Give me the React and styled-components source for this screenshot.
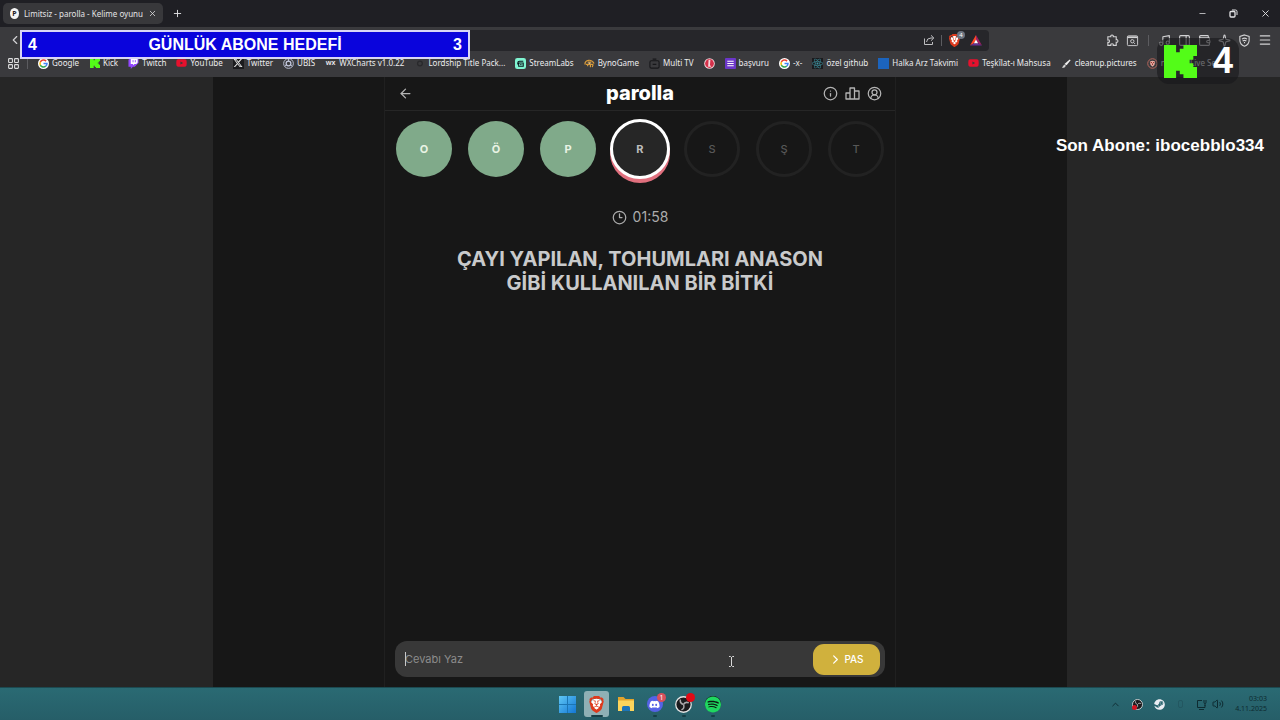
import styled, { createGlobalStyle } from "styled-components";
import {
  X, Plus, Minus, ChevronLeft, ChevronUp, LayoutGrid, Music, PanelRight,
  Wallet, Sparkle, Menu, Volume2, ArrowLeft, Info, CircleUserRound, Clock3,
} from "lucide-react";
import { IoChevronForward } from "react-icons/io5";
import { FaYoutube, FaXTwitter, FaDiscord, FaSteam, FaSpotify, FaReact } from "react-icons/fa6";
import { SiBrave } from "react-icons/si";

const letters = [
  { char: "O", state: "correct" },
  { char: "Ö", state: "correct" },
  { char: "P", state: "correct" },
  { char: "R", state: "active" },
  { char: "S", state: "idle" },
  { char: "Ş", state: "idle" },
  { char: "T", state: "idle" },
];

function KickIcon({ size = 11 }) {
  return (
    <svg width={size} height={size} viewBox="0 0 9 9" fill="#53fc18">
      <path d="M0 0h3.3v2h1V1h1V0H9v3H8v1H7v1h1v1h1v3H5.3V8h-1V7h-1v2H0z" />
    </svg>
  );
}

function GoogleIcon() {
  return (
    <svg width="11" height="11" viewBox="0 0 12 12">
      <circle cx="6" cy="6" r="6" fill="#fff" />
      <g fill="none" strokeWidth="1.7">
        <path d="M8.8 3.4A3.8 3.8 0 0 0 2.6 4.4" stroke="#ea4335" />
        <path d="M2.6 4.4A3.8 3.8 0 0 0 2.6 7.7" stroke="#fbbc05" />
        <path d="M2.6 7.7A3.8 3.8 0 0 0 8.4 8.9" stroke="#34a853" />
        <path d="M8.4 8.9A3.8 3.8 0 0 0 9.8 6H6" stroke="#4285f4" />
      </g>
    </svg>
  );
}

function TwitchIcon() {
  return (
    <svg width="11" height="11" viewBox="0 0 12 12">
      <path d="M2.5 0L.5 2v7.5H3V12l2.400-2.500h2L11.500 5.500V0z" fill="#9146ff" />
      <path d="M3 1h7.500v4L9 6.500H7L5.500 8V6.500H3z" fill="#fff" />
      <path d="M5.500 2.300v2.400M8 2.300v2.400" stroke="#9146ff" />
    </svg>
  );
}

function UbisIcon() {
  return (
    <svg width="11" height="11" viewBox="0 0 12 12" fill="none" stroke="#c3c8dd">
      <circle cx="6" cy="6" r="5.3" />
      <circle cx="6" cy="6" r="2.6" strokeWidth="1.4" />
      <path d="M6 1v3M2 9l2-2M10 9l-2-2" />
    </svg>
  );
}

function RingIcon() {
  return (
    <svg width="11" height="11" viewBox="0 0 12 12">
      <circle cx="6.5" cy="6" r="2.6" fill="none" stroke="#29292c" strokeWidth="1.4" />
    </svg>
  );
}

function StreamlabsIcon() {
  return (
    <svg width="11" height="11" viewBox="0 0 12 12">
      <rect width="12" height="12" rx="2.5" fill="#80f5d2" />
      <path d="M3 7V5.5Q3 3.5 5 3.5h4M4 5.5h5v3.5H4z" fill="none" stroke="#09161d" strokeWidth="1.1" />
      <path d="M6 6.8v1M7.5 6.8v1" stroke="#09161d" />
    </svg>
  );
}

function BynoIcon() {
  return (
    <svg width="11" height="11" viewBox="0 0 12 12" fill="none" stroke="#d99b3a" strokeWidth="1.3">
      <path d="M1 7Q1 3 5 2.5T11 6M2 7h8M4 4.5h4M4 7v2M7 7v3M10 7l-1 3" />
      <path d="M5 5.7h2" stroke="#e9d9b8" />
    </svg>
  );
}

function TvIcon() {
  return (
    <svg width="11" height="11" viewBox="0 0 12 12" fill="none" stroke="#17171a" strokeWidth="1.2">
      <rect x="1" y="3" width="10" height="8" rx="1.5" />
      <path d="M4 1.2h4M4 7h4" />
    </svg>
  );
}

function RedSealIcon() {
  return (
    <svg width="11" height="11" viewBox="0 0 12 12">
      <circle cx="6" cy="6" r="5.8" fill="#f0d3d7" />
      <circle cx="6" cy="6" r="4.8" fill="#d5304a" />
      <path d="M5 2h2l-.5 5.500L8 9.500H4.500z" fill="#f3d6da" />
    </svg>
  );
}

function FormIcon() {
  return (
    <svg width="11" height="11" viewBox="0 0 12 12">
      <rect width="12" height="12" rx="1" fill="#6b36c9" />
      <path d="M2.5 3.5h7M2.5 6h7M2.5 8.5h7" stroke="#fff" strokeWidth="1.2" />
    </svg>
  );
}

function BlueSquare() {
  return (
    <svg width="11" height="11">
      <rect width="11" height="11" fill="#1c64bd" />
    </svg>
  );
}

function CleanupIcon() {
  return (
    <svg width="11" height="11" viewBox="0 0 12 12">
      <path d="M9.5 1.5l1 1L6 8 3.8 6.6z" fill="#f2f2f2" />
      <path d="M3.5 7l2 1.5-2 2H1z" fill="#d4d4d4" />
    </svg>
  );
}

function NotiIcon() {
  return (
    <svg width="11" height="11" viewBox="0 0 12 12">
      <circle cx="6" cy="6" r="5.2" fill="none" stroke="#bf6a5f" />
      <path d="M3 4q3-2 6 0-.3 4-3 5.5Q3.3 8 3 4z" fill="#e9aaa0" />
      <path d="M4 5h1.4M6.6 5H8M6 6v1.5" stroke="#7d201d" />
    </svg>
  );
}

function ShareIcon() {
  return (
    <svg width="12" height="12" viewBox="0 0 12 12" fill="none" stroke="#bdbdc0">
      <path d="M1.5 4.5v6h8V8" />
      <path d="M3.5 8Q3.8 4 8 4h2.5M8 1.3L10.8 4 8 6.7" />
    </svg>
  );
}

function PuzzleIcon() {
  return (
    <svg width="13" height="13" viewBox="0 0 14 14" fill="none" stroke="currentColor" strokeWidth="1.2">
      <path d="M2 3h3.2q-.5-1.8 1.3-1.8T7.8 3H11v3.2q1.8-.5 1.8 1.3T11 8.8v3.4H7.8q.4-1.7-1.3-1.7t-1.3 1.7H2V9q1.7.4 1.7-1.3T2 6.4z" />
    </svg>
  );
}

function SearchWindowIcon() {
  return (
    <svg width="13" height="13" viewBox="0 0 14 14" fill="none" stroke="currentColor">
      <rect x="1.5" y="2" width="11" height="10.5" rx="1" />
      <path d="M1.5 3.5h11" strokeWidth="1.8" />
      <circle cx="6.8" cy="7.8" r="1.8" />
      <path d="M8.2 9.2l1.5 1.5" />
    </svg>
  );
}

function ShieldIcon() {
  return (
    <svg width="13" height="13" viewBox="0 0 14 14" fill="none" stroke="currentColor" strokeWidth="1.2">
      <path d="M7 1l5 1.6v4Q12 11 7 13.2 2 11 2 6.6v-4z" />
      <path d="M4.3 5.5q2.7-2 5.4 0M5 7.5q2-1.3 4 0M6.4 9.3h1.2" />
    </svg>
  );
}

function RestoreIcon() {
  return (
    <svg width="9" height="9" viewBox="0 0 9 9" fill="none" stroke="currentColor">
      <rect x="1" y="2.5" width="5" height="5.5" rx="1" strokeWidth="1.3" />
      <path d="M3 1h3.5Q8 1 8 2.5V6" />
    </svg>
  );
}

function BatIcon() {
  return (
    <svg width="12" height="11" viewBox="0 0 12 11">
      <path d="M6 0L0 10.5l4-2.2L6 5z" fill="#ff4724" />
      <path d="M6 0l6 10.5-4-2.2L6 5z" fill="#9e1f63" />
      <path d="M0 10.5h12L8 8.2H4z" fill="#662d91" />
      <path d="M6 4.5L3.9 8.2h4.2z" fill="#fff" />
    </svg>
  );
}

function PodiumIcon() {
  return (
    <svg width="15" height="15" viewBox="0 0 15 15" fill="none" stroke="currentColor" strokeWidth="1.3" strokeLinejoin="round">
      <path d="M1 7h4v6H1zM5 2h4.5v11H5zM9.5 5H14v8H9.5z" />
    </svg>
  );
}

function WindowsIcon() {
  return (
    <svg width="17" height="17" viewBox="0 0 17 17">
      <defs>
        <linearGradient id="win" x1="0" y1="0" x2="1" y2="1">
          <stop offset="0" stopColor="#5fc8f5" />
          <stop offset="1" stopColor="#1376d4" />
        </linearGradient>
      </defs>
      <rect width="17" height="17" fill="#1b76b4" />
      <path d="M0 0h8v8H0zM9 0h8v8H9zM0 9h8v8H0zM9 9h8v8H9z" fill="url(#win)" />
    </svg>
  );
}

function FolderIcon() {
  return (
    <svg width="18" height="16" viewBox="0 0 18 16">
      <path d="M1 1h5.5l2 2H17v4H1z" fill="#e3a32b" />
      <path d="M1 4.5h16V15H1z" fill="#fbd45c" />
      <path d="M5 15v-3.5Q5 10 6.5 10h5q1.5 0 1.5 1.5V15z" fill="#1d74b8" />
    </svg>
  );
}

function ObsIcon({ size }) {
  return (
    <svg width={size} height={size} viewBox="0 0 16 16">
      <circle cx="8" cy="8" r="7.3" fill="#1b1a1d" stroke="#e4e4e4" strokeWidth="1.2" />
      <g fill="none" stroke="#a9a7aa" strokeWidth="1.4">
        <path d="M5 3.3Q4.5 7 8 8" />
        <path d="M13 6.5Q9.5 5 8 8" />
        <path d="M6 13Q9.5 11.5 8 8" />
      </g>
    </svg>
  );
}

function DisplayIcon() {
  return (
    <svg width="12" height="11" viewBox="0 0 12 11" fill="none" stroke="currentColor">
      <path d="M6 1.5H1.5v7H9V6M3 10.5h5M8 1v2.5q0 1 1 1t1-1V1M9 4.5V7" />
    </svg>
  );
}

function TextCursor() {
  return (
    <svg width="7" height="11" viewBox="0 0 7 11" fill="none" stroke="#d8d8d8">
      <path d="M1 .5h1.5l1 1 1-1H6M3.5 1v9M1 10.5h1.5l1-1 1 1H6" />
    </svg>
  );
}

const bookmarks = [
  { label: "Google", icon: <GoogleIcon /> },
  { label: "Kick", icon: <KickIcon size={10} /> },
  { label: "Twitch", icon: <TwitchIcon /> },
  { label: "YouTube", icon: <FaYoutube color="#e6112d" size={12} /> },
  { label: "Twitter", icon: <FaXTwitter color="#e8e8e8" size={10} />, dark: true },
  { label: "UBIS", icon: <UbisIcon /> },
  { label: "WXCharts v1.0.22", icon: "wx" },
  { label: "Lordship Title Pack...", icon: <RingIcon /> },
  { label: "StreamLabs", icon: <StreamlabsIcon /> },
  { label: "BynoGame", icon: <BynoIcon /> },
  { label: "Multi TV", icon: <TvIcon /> },
  { label: "", icon: <RedSealIcon /> },
  { label: "başvuru", icon: <FormIcon /> },
  { label: "-x-", icon: <GoogleIcon /> },
  { label: "özel github", icon: <FaReact color="#3f93a1" />, dark: true },
  { label: "Halka Arz Takvimi", icon: <BlueSquare /> },
  { label: "Teşkîlat-ı Mahsusa", icon: <FaYoutube color="#e6112d" size={12} /> },
  { label: "cleanup.pictures", icon: <CleanupIcon /> },
  { label: "notifier Live Se", icon: <NotiIcon /> },
];

function Browser() {
  return (
    <>
      <TitleBar>
        <Tab>
          <Favicon>P</Favicon>
          <TabTitle>Limitsiz - parolla - Kelime oyunu</TabTitle>
          <IconButton aria-label="Sekmeyi kapat"><X size={9} /></IconButton>
        </Tab>
        <IconButton aria-label="Yeni sekme"><Plus size={11} /></IconButton>
        <WindowButtons>
          <IconButton aria-label="Küçült"><Minus size={9} /></IconButton>
          <IconButton aria-label="Geri yükle"><RestoreIcon /></IconButton>
          <IconButton aria-label="Kapat"><X size={11} /></IconButton>
        </WindowButtons>
      </TitleBar>
      <Toolbar>
        <IconButton aria-label="Geri"><ChevronLeft size={14} /></IconButton>
        <AddressBar>
          <ShareIcon />
          <Divider />
          <BraveShield>
            <BraveMark $size={13}><SiBrave /></BraveMark>
            <ShieldCount>4</ShieldCount>
          </BraveShield>
          <BatIcon />
        </AddressBar>
        <Tools>
          <IconButton aria-label="Uzantılar"><PuzzleIcon /></IconButton>
          <IconButton aria-label="Ara"><SearchWindowIcon /></IconButton>
          <Divider $spaced />
          <IconButton aria-label="Müzik"><Music size={13} /></IconButton>
          <IconButton aria-label="Kenar çubuğu"><PanelRight size={13} /></IconButton>
          <IconButton aria-label="Cüzdan"><Wallet size={13} /></IconButton>
          <IconButton aria-label="Leo"><Sparkle size={13} /></IconButton>
          <IconButton aria-label="VPN"><ShieldIcon /></IconButton>
          <IconButton aria-label="Menü"><Menu size={14} /></IconButton>
        </Tools>
      </Toolbar>
      <Bookmarks>
        <BookmarksLead>
          <LayoutGrid size={13} />
          <Divider />
        </BookmarksLead>
        {bookmarks.map((b, i) => (
          <Bookmark key={i} href="#">
            <BookmarkIcon $dark={b.dark}>{b.icon}</BookmarkIcon>
            {b.label}
          </Bookmark>
        ))}
      </Bookmarks>
    </>
  );
}

function Game() {
  return (
    <Page>
      <Site>
        <Panel>
          <Header>
            <HeaderButton aria-label="Geri dön"><ArrowLeft size={15} /></HeaderButton>
            <Logo>parolla</Logo>
            <HeaderActions>
              <HeaderButton aria-label="Bilgi"><Info size={15} /></HeaderButton>
              <HeaderButton aria-label="İstatistik"><PodiumIcon /></HeaderButton>
              <HeaderButton aria-label="Profil"><CircleUserRound size={15} /></HeaderButton>
            </HeaderActions>
          </Header>
          <Letters>
            {letters.map((l) => (
              <Letter key={l.char} $state={l.state}>{l.char}</Letter>
            ))}
          </Letters>
          <Timer><Clock3 size={15} />01:58</Timer>
          <Question>ÇAYI YAPILAN, TOHUMLARI ANASON GİBİ KULLANILAN BİR BİTKİ</Question>
          <AnswerForm onSubmit={(e) => e.preventDefault()}>
            <AnswerInput placeholder="Cevabı Yaz" aria-label="Cevabı Yaz" />
            <Caret />
            <PassButton type="button"><IoChevronForward size={13} />PAS</PassButton>
            <Pointer><TextCursor /></Pointer>
          </AnswerForm>
        </Panel>
      </Site>
    </Page>
  );
}

function Taskbar() {
  return (
    <Bar>
      <Apps>
        <AppButton aria-label="Başlat"><WindowsIcon /></AppButton>
        <AppButton aria-label="Brave" $active><BraveMark $size={17}><SiBrave /></BraveMark></AppButton>
        <AppButton aria-label="Dosya Gezgini"><FolderIcon /></AppButton>
        <AppButton aria-label="Discord" $running>
          <Round $bg="#5562e6"><FaDiscord color="#fff" size={11} /></Round>
          <Badge>1</Badge>
        </AppButton>
        <AppButton aria-label="OBS" $running>
          <ObsIcon size={17} />
          <Badge />
        </AppButton>
        <AppButton aria-label="Spotify" $running>
          <Round $bg="#0c1a12"><FaSpotify color="#1fd760" size={17} /></Round>
        </AppButton>
      </Apps>
      <Tray>
        <ChevronUp size={11} />
        <SmallRound><ObsIcon size={11} /><RecDot /></SmallRound>
        <FaSteam color="#e9edf3" size={11} />
        <Faint />
        <TrayGroup>
          <DisplayIcon />
          <Volume2 size={12} />
        </TrayGroup>
        <Clock><time>03:03</time><time>4.11.2025</time></Clock>
      </Tray>
    </Bar>
  );
}

function App() {
  return (
    <>
      <GlobalStyle />
      <Desktop>
        <Browser />
        <Game />
        <Taskbar />
        <Goal><span>4</span><span>GÜNLÜK ABONE HEDEFİ</span><span>3</span></Goal>
        <KickCounter><KickIcon size={33} />4</KickCounter>
        <LastSub>Son Abone: ibocebblo334</LastSub>
      </Desktop>
    </>
  );
}

const GlobalStyle = createGlobalStyle`
  *{
    box-sizing: border-box;
  }
  body{
    margin: 0;
    background: #262626;
    font-family: "Noto Sans", "Open Sans", sans-serif;
  }
  button{
    font: inherit;
    color: inherit;
    border: 0;
    padding: 0;
    background: none;
  }
`;

const Desktop = styled.div`
    position: relative;
    display: flex;
    flex-direction: column;
    min-height: 100vh;
    overflow: hidden;
`;
const TitleBar = styled.div`
    display: flex;
    align-items: center;
    height: 27px;
    padding: 0 9px 0 3px;
    gap: 9px;
    background: #1f1f24;
    color: #e4e4e6;
`;
const Tab = styled.div`
    display: flex;
    align-items: center;
    gap: 5px;
    width: 160px;
    height: 21px;
    padding: 0 6px 0 7px;
    border-radius: 5px;
    background: #38383b;
`;
const Favicon = styled.span`
    display: flex;
    align-items: center;
    justify-content: center;
    width: 11px;
    height: 11px;
    border-radius: 50%;
    background: #f4f4f4;
    color: #1c1c1c;
    font-size: 7px;
    font-weight: 700;
`;
const TabTitle = styled.span`
    flex: 1;
    font-size: 8px;
    white-space: nowrap;
`;
const IconButton = styled.button`
    display: flex;
    align-items: center;
    justify-content: center;
`;
const WindowButtons = styled.div`
    display: flex;
    align-items: center;
    gap: 22px;
    margin-left: auto;
`;
const Toolbar = styled.div`
    display: grid;
    grid-template-columns: 1fr minmax(0, 698px) 1fr;
    align-items: center;
    height: 26px;
    padding: 0 8px;
    background: #3a3a3d;
    color: #d2d2d4;
    > button{
      justify-self: start;
    }
`;
const AddressBar = styled.div`
    display: flex;
    align-items: center;
    justify-content: flex-end;
    gap: 6px;
    height: 21px;
    padding-right: 7px;
    border-radius: 4px;
    background: #26262a;
`;
const Divider = styled.span`
    width: 1px;
    height: 11px;
    flex: none;
    margin: 0 ${({ $spaced }) => ($spaced ? "2px" : "0")};
    background: #5c5c60;
`;
const BraveShield = styled.span`
    position: relative;
    display: flex;
    margin-right: 3px;
`;
const BraveMark = styled.span`
    display: flex;
    font-size: ${({ $size }) => $size}px;
    color: #dd3a1d;
    background: radial-gradient(#fff 45%, transparent 50%);
`;
const ShieldCount = styled.span`
    position: absolute;
    top: -3px;
    right: -4px;
    width: 8px;
    height: 8px;
    border-radius: 4px;
    background: #6d7480;
    color: #fff;
    font-size: 6px;
    line-height: 8px;
    text-align: center;
`;
const Tools = styled.div`
    display: flex;
    align-items: center;
    justify-content: flex-end;
    gap: 7px;
`;
const Bookmarks = styled.nav`
    display: flex;
    align-items: center;
    gap: 10px;
    height: 24px;
    padding: 0 7px 4px;
    overflow: hidden;
    background: #3a3a3d;
    color: #dededf;
`;
const BookmarksLead = styled.div`
    display: flex;
    align-items: center;
    flex: none;
    gap: 7px;
`;
const Bookmark = styled.a`
    display: flex;
    align-items: center;
    gap: 3px;
    flex: none;
    color: #ececee;
    font-size: 8px;
    line-height: 12px;
    text-decoration: none;
    white-space: nowrap;
`;
const BookmarkIcon = styled.span`
    display: flex;
    align-items: center;
    justify-content: center;
    width: 11px;
    height: 11px;
    font-size: 11px;
    background: ${({ $dark }) => ($dark ? "#1b1b1e" : "none")};
    &:not(:has(svg)){
      font-size: 7px;
      font-weight: 600;
    }
`;
const Page = styled.div`
    display: flex;
    flex: 1;
    justify-content: center;
    background: #262626;
`;
const Site = styled.div`
    display: flex;
    justify-content: center;
    width: calc(100% * 2 / 3);
    background: #171717;
`;
const Panel = styled.main`
    display: flex;
    flex-direction: column;
    width: 100%;
    max-width: 512px;
    border: solid #202020;
    border-width: 0 1px;
    font-family: Inter, sans-serif;
`;
const Header = styled.header`
    display: grid;
    grid-template-columns: 1fr auto 1fr;
    align-items: center;
    height: 34px;
    padding: 0 13px;
    border-bottom: 1px solid #262626;
    color: #b4b4b4;
`;
const HeaderButton = styled.button`
    display: flex;
`;
const HeaderActions = styled.div`
    display: flex;
    justify-content: flex-end;
    gap: 7px;
`;
const Logo = styled.h1`
    margin: 0;
    color: #fff;
    font-size: 20px;
    font-weight: 800;
    line-height: 24px;
    padding-bottom: 2px;
`;
const Letters = styled.div`
    display: flex;
    align-items: center;
    justify-content: center;
    gap: 16px;
    height: 76px;
`;
const Letter = styled.span`
    display: flex;
    align-items: center;
    justify-content: center;
    flex: none;
    width: 56px;
    height: 56px;
    border-radius: 50%;
    font-size: 11px;
    font-weight: 700;
    ${({ $state }) => $state === "correct" && `
      background: #80aa8a;
      color: #e9f3e4;
    `}
    ${({ $state }) => $state === "active" && `
      width: 60px;
      height: 60px;
      margin: 0 -2px;
      border: 3px solid #fff;
      background: #262626;
      color: #bdbdbd;
      box-shadow: 0 4px 0 #e0707e;
    `}
    ${({ $state }) => $state === "idle" && `
      border: 3px solid #222;
      color: #585858;
      font-weight: 500;
    `}
`;
const Timer = styled.div`
    display: flex;
    align-items: center;
    justify-content: center;
    gap: 6px;
    margin-top: 20px;
    color: #acacac;
    font-size: 14px;
    line-height: 20px;
`;
const Question = styled.h2`
    margin: 20px auto 0;
    max-width: 400px;
    color: #c9cacb;
    font-size: 20px;
    font-weight: 700;
    line-height: 24px;
    text-align: center;
`;
const AnswerForm = styled.form`
    position: relative;
    display: flex;
    align-items: center;
    height: 36px;
    margin: auto 10px 10px;
    padding-right: 5px;
    border-radius: 12px;
    background: #383838;
`;
const AnswerInput = styled.input`
    flex: 1;
    min-width: 0;
    height: 100%;
    padding: 0 10px;
    border: 0;
    outline: 0;
    background: none;
    color: #ddd;
    font: 11px Inter, sans-serif;
    &::placeholder{
      color: #8c8c8c;
    }
`;
const Caret = styled.i`
    position: absolute;
    left: 10px;
    top: 11px;
    width: 1px;
    height: 14px;
    background: #c8c8c8;
`;
const PassButton = styled.button`
    display: flex;
    align-items: center;
    justify-content: center;
    gap: 2px;
    width: 67px;
    height: 31px;
    border-radius: 11px;
    background: #d0b13d;
    color: #fff;
    font-size: 10px;
    font-weight: 500;
`;
const Pointer = styled.span`
    position: absolute;
    right: 150px;
    top: 15px;
    display: flex;
`;
const Bar = styled.footer`
    display: grid;
    grid-template-columns: 1fr auto 1fr;
    align-items: center;
    height: 33px;
    border-top: 1px solid #1c4a51;
    background: linear-gradient(#2a6a73, #265e68);
`;
const Apps = styled.div`
    display: flex;
    grid-column: 2;
    gap: 4px;
`;
const AppButton = styled.button`
    position: relative;
    display: flex;
    align-items: center;
    justify-content: center;
    width: 25px;
    height: 26px;
    border-radius: 3px;
    background: ${({ $active }) => ($active ? "#8fb0b5" : "none")};
    &::after{
      content: "";
      position: absolute;
      bottom: 0;
      width: ${({ $active }) => ($active ? "12px" : "4px")};
      height: 2px;
      border-radius: 1px;
      background: ${({ $active, $running }) => ($active || $running ? "#163f47" : "none")};
    }
`;
const Round = styled.span`
    display: flex;
    align-items: center;
    justify-content: center;
    width: 16px;
    height: 16px;
    border-radius: 50%;
    background: ${({ $bg }) => $bg};
`;
const Badge = styled.span`
    position: absolute;
    top: 2px;
    right: 1px;
    width: 9px;
    height: 9px;
    border-radius: 50%;
    background: ${({ children }) => (children ? "#d8505c" : "#e00a16")};
    color: #fff;
    font-size: 7px;
    line-height: 9px;
    text-align: center;
`;
const Tray = styled.div`
    display: flex;
    align-items: center;
    justify-content: flex-end;
    gap: 11px;
    padding-right: 13px;
    color: #0e2b31;
`;
const SmallRound = styled.span`
    position: relative;
    display: flex;
`;
const RecDot = styled.i`
    position: absolute;
    left: 0;
    bottom: 0;
    width: 5px;
    height: 5px;
    border-radius: 50%;
    background: #d31522;
`;
const Faint = styled.i`
    width: 5px;
    height: 8px;
    margin: 0 2px;
    border: 1px solid #235761;
    border-radius: 2px;
`;
const TrayGroup = styled.span`
    display: flex;
    align-items: center;
    gap: 4px;
`;
const Clock = styled.div`
    display: flex;
    flex-direction: column;
    align-items: flex-end;
    font-size: 7px;
    line-height: 10px;
`;
const Goal = styled.div`
    position: absolute;
    left: 20px;
    top: 30px;
    display: flex;
    align-items: center;
    justify-content: space-between;
    width: 450px;
    height: 29px;
    padding: 0 6px;
    border: 2px solid #d9d6f5;
    background: #0a04dc;
    color: #fff;
    font: bold 16px "Liberation Sans", sans-serif;
`;
const KickCounter = styled.div`
    position: absolute;
    right: 41px;
    top: 38px;
    display: flex;
    align-items: center;
    justify-content: space-between;
    width: 82px;
    height: 46px;
    padding: 0 6px 0 7px;
    border-radius: 12px;
    background: rgba(24, 24, 26, 0.6);
    color: #fff;
    font: bold 36px "Liberation Sans", sans-serif;
`;
const LastSub = styled.div`
    position: absolute;
    right: 16px;
    top: 136px;
    color: #fff;
    font: bold 17px/20px "Liberation Sans", sans-serif;
`;

export default App;
